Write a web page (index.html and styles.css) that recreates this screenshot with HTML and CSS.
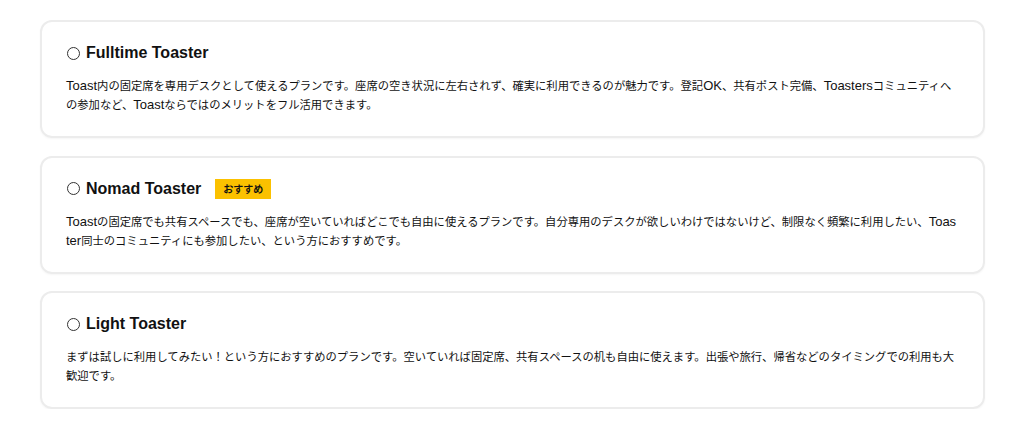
FILE: index.html
```html
<!DOCTYPE html>
<html lang="ja">
<head>
<meta charset="utf-8">
<title>Plans</title>
<link rel="stylesheet" href="styles.css">
</head>
<body>
<div class="plans">
  <section class="plan">
    <h2 class="plan-title"><span class="radio"></span>Fulltime Toaster</h2>
    <p class="plan-desc"><span class="en">Toast</span>内の固定席を専用デスクとして使えるプランです。座席の空き状況に左右されず、確実に利用できるのが魅力です。登記<span class="en">OK</span>、共有ポスト完備、<span class="en">Toasters</span>コミュニティへの参加など、<span class="en">Toast</span>ならではのメリットをフル活用できます。</p>
  </section>
  <section class="plan">
    <h2 class="plan-title"><span class="radio"></span>Nomad Toaster<span class="badge">おすすめ</span></h2>
    <p class="plan-desc"><span class="en">Toast</span>の固定席でも共有スペースでも、座席が空いていればどこでも自由に使えるプランです。自分専用のデスクが欲しいわけではないけど、制限なく頻繁に利用したい、<span class="en">Toaster</span>同士のコミュニティにも参加したい、という方におすすめです。</p>
  </section>
  <section class="plan">
    <h2 class="plan-title"><span class="radio"></span>Light Toaster</h2>
    <p class="plan-desc">まずは試しに利用してみたい！という方におすすめのプランです。空いていれば固定席、共有スペースの机も自由に使えます。出張や旅行、帰省などのタイミングでの利用も大歓迎です。</p>
  </section>
</div>
</body>
</html>
```
FILE: styles.css
```css
html, body {
  margin: 0;
  padding: 0;
  background: #ffffff;
}
body {
  font-family: "Liberation Sans", "Noto Sans CJK JP", sans-serif;
  color: #111;
}
.plans {
  display: flex;
  flex-direction: column;
  gap: 17.5px;
  width: 945px;
  padding: 20px 0 0 40px;
}
.plan {
  box-sizing: border-box;
  height: 118px;
  border: 2px solid #ececec;
  border-radius: 12px;
  padding: 20px 26.5px 0 24px;
  box-shadow: 0 1px 2px rgba(0,0,0,0.04);
}
.plan-title {
  display: flex;
  align-items: center;
  margin: 0;
  height: 22px;
  font-size: 16px;
  font-weight: bold;
  color: #111;
}
.radio {
  box-sizing: border-box;
  width: 13px;
  height: 13px;
  border: 1px solid #333;
  border-radius: 50%;
  margin: 0 6px 0 1px;
}
.badge {
  margin-left: 14px;
  background: #fbc100;
  color: #111;
  font-family: "Noto Sans CJK JP", sans-serif;
  font-size: 10px;
  font-weight: bold;
  line-height: 20px;
  height: 20px;
  padding: 0 8px;
}
.plan-desc {
  margin: 12px 0 0;
  font-family: "Noto Sans CJK JP", sans-serif;
  font-size: 11.3px;
  line-height: 19px;
  word-break: break-all;
  color: #111;
}
.en {
  font-family: "Liberation Sans", "Noto Sans CJK JP", sans-serif;
  font-size: 13px;
}
```
